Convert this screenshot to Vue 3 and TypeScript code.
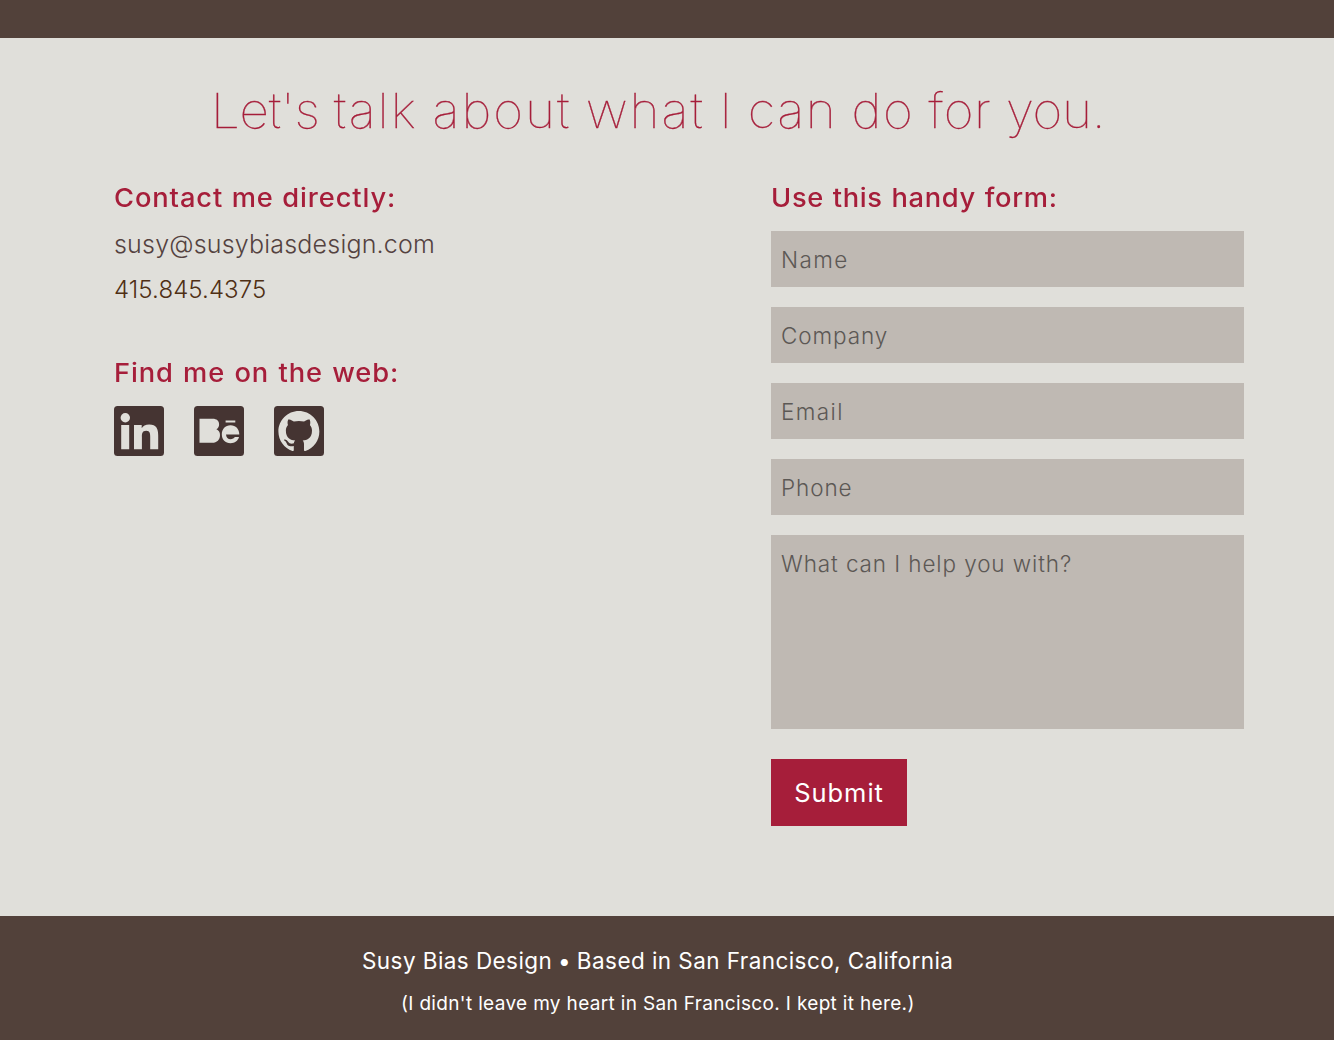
<script setup lang="ts">
interface Field {
  name: string
  label: string
}

const fields: Field[] = [
  { name: 'name', label: 'Name' },
  { name: 'company', label: 'Company' },
  { name: 'email', label: 'Email' },
  { name: 'phone', label: 'Phone' },
]
</script>

<template>
  <div class="page">
    <div class="band"></div>
    <main class="contact">
      <h1><span class="lead">Let's</span> <span class="wide">talk about what</span> I can do <span class="snug">for</span> <span class="tight">you.</span></h1>
      <div class="columns">
        <section class="direct">
          <h2>Contact me directly:</h2>
          <a class="mail">susy@susybiasdesign.com</a>
          <a class="tel">415.845.4375</a>
          <h2 class="web">Find me on the web:</h2>
          <div class="social">
            <svg viewBox="0 0 50 50" aria-label="LinkedIn">
              <rect width="50" height="50" rx="3.5" />
              <g class="glyph">
                <circle cx="11.3" cy="11.8" r="4.7" />
                <path d="M7.2 19h8v24.2h-8zM20 19h7.7v3.3c1.2-2.2 3.8-3.8 7.5-3.8 7.4 0 9 4.6 9 11v13.7h-8V31c0-3 0-6.2-4-6.2s-4.3 3-4.3 6v12.4H20z" />
              </g>
            </svg>
            <svg viewBox="0 0 50 50" aria-label="Behance">
              <rect width="50" height="50" rx="3.5" />
              <g class="glyph">
                <path d="M5.5 12.8h13.2c4 0 6.4 2.1 6.4 5.6 0 2.2-1 3.8-2.7 4.8 2.4 1 3.6 3 3.6 5.8 0 4.9-3 7.800-7.800 7.800H5.500z" />
                <path d="M31.600 14.600h9.700v1.900h-9.700z" />
                <path d="M36.500 19.200c5.300 0 8.800 3.800 8.800 9.300H32c.2 3 1.900 4.700 4.600 4.700 1.900 0 3.300-.8 4.200-2.100h4.200c-1.100 3.900-4.100 6.200-8.500 6.200-5.200 0-8.700-3.700-8.700-9 0-5.200 3.500-9.100 8.700-9.100z" />
              </g>
            </svg>
            <svg viewBox="0 0 50 50" aria-label="GitHub">
              <rect width="50" height="50" rx="3.5" />
              <g class="glyph">
                <path transform="translate(4.4 5) scale(2.56)" d="M8 0C3.580 0 0 3.580 0 8c0 3.540 2.290 6.530 5.470 7.590.4.070.55-.17.55-.38 0-.19-.01-.82-.01-1.490-2.010.37-2.530-.49-2.690-.94-.09-.23-.48-.94-.82-1.130-.28-.15-.68-.52-.01-.53.63-.01 1.080.58 1.230.82.72 1.210 1.870.87 2.330.66.07-.52.28-.87.51-1.070-1.780-.2-3.640-.89-3.640-3.950 0-.87.31-1.590.82-2.150-.08-.2-.36-1.020.08-2.120 0 0 .67-.21 2.200.82.640-.18 1.320-.27 2-.27s1.360.09 2 .27c1.530-1.040 2.200-.82 2.200-.82.44 1.100.16 1.920.08 2.120.51.56.82 1.270.82 2.150 0 3.070-1.870 3.750-3.650 3.950.29.25.54.73.54 1.480 0 1.070-.01 1.930-.01 2.200 0 .21.15.46.55.38A8.010 8.010 0 0 0 16 8c0-4.420-3.580-8-8-8z" />
              </g>
            </svg>
          </div>
        </section>
        <form @submit.prevent>
          <h2 class="handy">Use this handy form:</h2>
          <input v-for="f in fields" :key="f.name" :name="f.name" :class="f.name" :placeholder="f.label" />
          <textarea name="message" placeholder="What can I help you with?"></textarea>
          <button type="submit">Submit</button>
        </form>
      </div>
    </main>
    <footer>
      <p class="base">Susy Bias Design <span class="dot">•</span> Based in San Francisco, California</p>
      <p class="aside">(I didn't leave my heart in San Francisco. I kept it here.)</p>
    </footer>
  </div>
</template>

<style>
body {
  margin: 0;
  background: #e0dfda;
}
</style>

<style scoped>
.page {
  display: flex;
  flex-direction: column;
  height: 1040px;
  overflow: hidden;
  background: #e0dfda;
  color: #52413a;
  font-family: Inter, "Liberation Sans", sans-serif;
  font-kerning: normal;
}
.band {
  height: 38px;
  flex: none;
  background: #52413a;
}
.contact {
  box-sizing: border-box;
  height: 878px;
  flex: none;
  padding: 43px 90px 0 114px;
}
h1 {
  width: 860px;
  margin: 0 0 41px 97px;
  font-size: 48px;
  font-weight: 100;
  line-height: 60px;
  letter-spacing: 1.4px;
  word-spacing: -1.5px;
  white-space: nowrap;
  color: #a61e3a;
  -webkit-text-stroke: 0.3px #a61e3a;
  transform: scaleX(1.07);
  transform-origin: 0 0;
}
.lead {
  letter-spacing: -0.3px;
}
.wide {
  letter-spacing: 1.85px;
}
.snug {
  letter-spacing: 0.7px;
}
.tight {
  letter-spacing: -0.3px;
}
.columns {
  display: flex;
  justify-content: space-between;
}
.direct {
  display: flex;
  flex-direction: column;
}
h2 {
  margin: 0;
  font-size: 26px;
  font-weight: 500;
  line-height: 32px;
  letter-spacing: 0.84px;
  word-spacing: 0.4px;
  white-space: nowrap;
  color: #a61e3a;
  transform: scaleX(1.05);
  transform-origin: 0 0;
}
.mail,
.tel {
  line-height: 45px;
  font-weight: 300;
}
.mail {
  margin-top: 8px;
  font-size: 25px;
  letter-spacing: 0.2px;
  color: #54423f;
}
.tel {
  font-size: 24px;
  letter-spacing: 0.1px;
  color: #4f2f14;
}
.web {
  margin-top: 45px;
  letter-spacing: 0.84px;
  word-spacing: 1.1px;
}
.handy {
  letter-spacing: 0.65px;
  word-spacing: 0.7px;
}
.social {
  display: flex;
  gap: 30px;
  margin-top: 17px;
}
.social svg {
  display: block;
  width: 50px;
  height: 50px;
  fill: #453432;
}
.glyph {
  fill: #e0dfda;
  filter: blur(0.5px);
}
form {
  display: flex;
  flex-direction: column;
  align-items: flex-start;
  width: 473px;
}
input,
textarea {
  box-sizing: border-box;
  display: block;
  width: 100%;
  margin: 0 0 20px;
  border: 0;
  border-radius: 0;
  outline: 0;
  background: #bfb9b3;
  font-family: inherit;
  font-size: 22.5px;
  font-weight: 300;
  letter-spacing: 0.9px;
  color: #52413a;
}
input {
  height: 56px;
  padding: 0 10px;
}
input.name,
input.email {
  letter-spacing: 1.4px;
}
input:first-of-type {
  margin-top: 17px;
}
textarea {
  height: 194px;
  margin-bottom: 30px;
  padding: 15px 10px;
  line-height: 28px;
  resize: none;
}
input::placeholder,
textarea::placeholder {
  color: #5c5855;
  opacity: 1;
}
button {
  width: 136px;
  height: 67px;
  padding: 0;
  border: 0;
  background: #a61e3a;
  color: #fff;
  font-family: inherit;
  font-size: 25.5px;
  font-weight: 400;
  letter-spacing: 0.95px;
}
footer {
  flex: 1;
  background: #52413a;
  color: #fff;
  white-space: nowrap;
}
footer p {
  margin: 0;
}
.base {
  padding: 29px 0 0 362px;
  font-size: 22.5px;
  line-height: 32px;
  letter-spacing: 0.43px;
}
.dot {
  margin: 0 -1px;
}
.aside {
  padding: 12px 0 0 401px;
  font-size: 19px;
  line-height: 30px;
  letter-spacing: 0.34px;
}
</style>
